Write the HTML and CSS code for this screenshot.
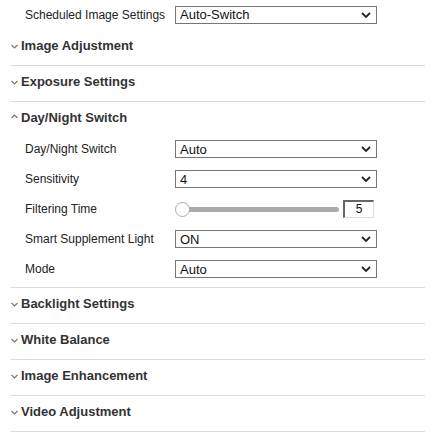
FILE: index.html
```html
<!DOCTYPE html>
<html>
<head>
<meta charset="utf-8">
<link rel="stylesheet" href="styles.css">
</head>
<body>
<div class="page">
  <div class="row top-row">
    <span class="label">Scheduled Image Settings</span>
    <div class="select"><span>Auto-Switch</span><svg class="caret" width="10" height="6" viewBox="0 0 10 6"><path d="M1 1 L5 5 L9 1" fill="none" stroke="#1c2333" stroke-width="1.8"/></svg></div>
  </div>

  <div class="section">
    <div class="header"><svg class="chev" width="7" height="5" viewBox="0 0 7 5"><path d="M0.5 1 L3.5 4 L6.5 1" fill="none" stroke="#777" stroke-width="1.2"/></svg>Image Adjustment</div>
  </div>
  <div class="section">
    <div class="header"><svg class="chev" width="7" height="5" viewBox="0 0 7 5"><path d="M0.5 1 L3.5 4 L6.5 1" fill="none" stroke="#777" stroke-width="1.2"/></svg>Exposure Settings</div>
  </div>
  <div class="section open">
    <div class="header"><svg class="chev" width="7" height="5" viewBox="0 0 7 5"><path d="M0.5 4 L3.5 1 L6.5 4" fill="none" stroke="#777" stroke-width="1.2"/></svg>Day/Night Switch</div>
    <div class="body">
      <div class="row">
        <span class="label">Day/Night Switch</span>
        <div class="select"><span>Auto</span><svg class="caret" width="10" height="6" viewBox="0 0 10 6"><path d="M1 1 L5 5 L9 1" fill="none" stroke="#1c2333" stroke-width="1.8"/></svg></div>
      </div>
      <div class="row">
        <span class="label">Sensitivity</span>
        <div class="select"><span>4</span><svg class="caret" width="10" height="6" viewBox="0 0 10 6"><path d="M1 1 L5 5 L9 1" fill="none" stroke="#1c2333" stroke-width="1.8"/></svg></div>
      </div>
      <div class="row">
        <span class="label">Filtering Time</span>
        <div class="slider">
          <div class="track"><span class="thumb"></span></div>
          <div class="numbox">5</div>
        </div>
      </div>
      <div class="row">
        <span class="label">Smart Supplement Light</span>
        <div class="select"><span>ON</span><svg class="caret" width="10" height="6" viewBox="0 0 10 6"><path d="M1 1 L5 5 L9 1" fill="none" stroke="#1c2333" stroke-width="1.8"/></svg></div>
      </div>
      <div class="row">
        <span class="label">Mode</span>
        <div class="select"><span>Auto</span><svg class="caret" width="10" height="6" viewBox="0 0 10 6"><path d="M1 1 L5 5 L9 1" fill="none" stroke="#1c2333" stroke-width="1.8"/></svg></div>
      </div>
    </div>
  </div>
  <div class="section">
    <div class="header"><svg class="chev" width="7" height="5" viewBox="0 0 7 5"><path d="M0.5 1 L3.5 4 L6.5 1" fill="none" stroke="#777" stroke-width="1.2"/></svg>Backlight Settings</div>
  </div>
  <div class="section">
    <div class="header"><svg class="chev" width="7" height="5" viewBox="0 0 7 5"><path d="M0.5 1 L3.5 4 L6.5 1" fill="none" stroke="#777" stroke-width="1.2"/></svg>White Balance</div>
  </div>
  <div class="section">
    <div class="header"><svg class="chev" width="7" height="5" viewBox="0 0 7 5"><path d="M0.5 1 L3.5 4 L6.5 1" fill="none" stroke="#777" stroke-width="1.2"/></svg>Image Enhancement</div>
  </div>
  <div class="section">
    <div class="header"><svg class="chev" width="7" height="5" viewBox="0 0 7 5"><path d="M0.5 1 L3.5 4 L6.5 1" fill="none" stroke="#777" stroke-width="1.2"/></svg>Video Adjustment</div>
  </div>
</div>
</body>
</html>
```

FILE: styles.css
```css
html, body {
  margin: 0;
  padding: 0;
  background: #fff;
}
body {
  font-family: Arial, "Liberation Sans", sans-serif;
  color: #222;
}
.page {
  width: 415px;
  margin-left: 10px;
}
.row {
  display: flex;
  align-items: center;
  height: 30px;
}
.top-row {
  height: 29px;
  padding-bottom: 1px;
}
.label {
  width: 150px;
  padding-left: 15px;
  font-size: 12px;
  color: #222;
}
.select {
  box-sizing: border-box;
  width: 202px;
  height: 18px;
  border: 1px solid #767676;
  display: flex;
  align-items: center;
  justify-content: space-between;
  padding: 0 5px 0 4px;
  font-size: 13px;
  color: #111;
}
.caret {
  display: block;
}
.section {
  border-bottom: 1px solid #dcdcdc;
}
.header {
  box-sizing: border-box;
  height: 35px;
  padding-bottom: 4px;
  display: flex;
  align-items: center;
  font-size: 13px;
  font-weight: bold;
  color: #333;
}
.chev {
  margin: 2px 3px 0 1px;
  display: block;
}
.section.open .header {
  height: 32px;
  padding-bottom: 2px;
}
.section.open .chev {
  margin-top: -1px;
}
.section.open .body {
  padding-bottom: 3px;
}
.slider {
  display: flex;
  align-items: center;
  width: 202px;
}
.track {
  position: relative;
  margin-left: 7px;
  width: 157px;
  height: 5px;
  background: #aaa;
  border-radius: 0 3px 3px 0;
}
.thumb {
  position: absolute;
  left: -7px;
  top: -5px;
  box-sizing: border-box;
  width: 15px;
  height: 15px;
  border-radius: 50%;
  background: #fff;
  border: 1px solid #aaa;
}
.numbox {
  box-sizing: border-box;
  margin-left: 4px;
  width: 31px;
  height: 18px;
  border-style: solid;
  border-width: 2px 1px 1px 2px;
  border-color: #666 #ddd #ddd #666;
  font-size: 12px;
  text-align: center;
  line-height: 15px;
  color: #111;
}
```
